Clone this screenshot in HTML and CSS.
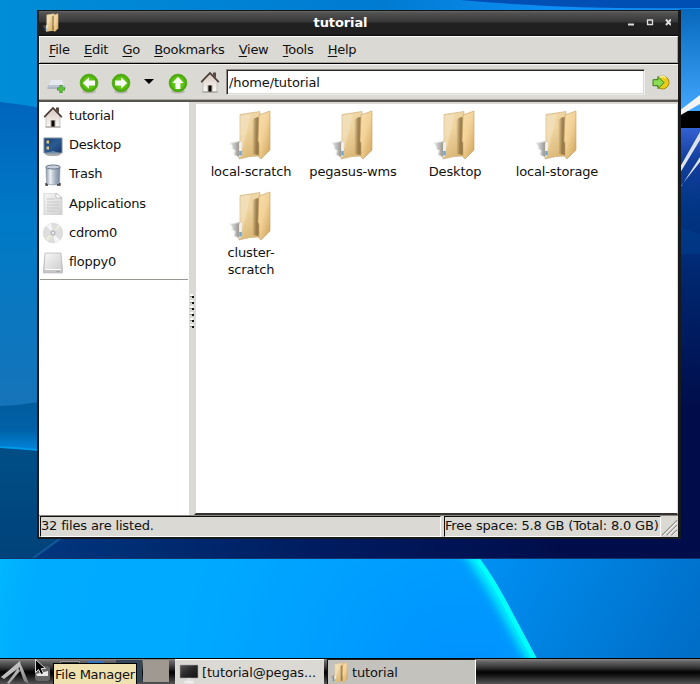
FILE: index.html
```
<!DOCTYPE html>
<html lang="en">
<head>
<meta charset="utf-8">
<title>tutorial</title>
<link rel="stylesheet" href="styles.css">
</head>
<body>
<svg width="0" height="0" class="defs">
  <defs>
    <linearGradient id="fold" x1="0" y1="0" x2=".4" y2="1"><stop offset="0" stop-color="#edd6a8"/><stop offset=".45" stop-color="#efd5a1"/><stop offset="1" stop-color="#dbb878"/></linearGradient>
    <linearGradient id="flap" x1="0" y1="0" x2=".8" y2="1"><stop offset="0" stop-color="#f7dfb0"/><stop offset=".5" stop-color="#f3d297"/><stop offset="1" stop-color="#d3a962"/></linearGradient>
    <linearGradient id="gap" x1="0" x2="1"><stop offset="0" stop-color="#8b6c39" stop-opacity="0"/><stop offset=".6" stop-color="#7b6033" stop-opacity=".7"/><stop offset="1" stop-color="#69502a" stop-opacity=".6"/></linearGradient>
    <linearGradient id="shade" x1="0" x2="1"><stop offset="0" stop-color="#aaa" stop-opacity=".4"/><stop offset="1" stop-color="#555" stop-opacity=".9"/></linearGradient>
    <radialGradient id="green" cx=".5" cy=".5" r=".5"><stop offset="0" stop-color="#83dc2e"/><stop offset=".7" stop-color="#58bd10"/><stop offset="1" stop-color="#429c08"/></radialGradient>
    <linearGradient id="wall" x1="0" y1="0" x2="0" y2="1"><stop offset="0" stop-color="#d8c9bf"/><stop offset="1" stop-color="#fbfaf8"/></linearGradient>
    <linearGradient id="metal" x1="0" x2="1"><stop offset="0" stop-color="#8795a8"/><stop offset=".3" stop-color="#eef2f7"/><stop offset=".6" stop-color="#aebaca"/><stop offset="1" stop-color="#77869a"/></linearGradient>
    <linearGradient id="paper" x1="0" y1="0" x2="1" y2="1"><stop offset="0" stop-color="#f7f7f7"/><stop offset="1" stop-color="#cfcfcf"/></linearGradient>
    <linearGradient id="screen" x1="0" y1="0" x2="1" y2="1"><stop offset="0" stop-color="#1b3f72"/><stop offset=".5" stop-color="#2b5b93"/><stop offset="1" stop-color="#153a6b"/></linearGradient>
    <linearGradient id="dark" x1="0" y1="0" x2="1" y2="1"><stop offset="0" stop-color="#555"/><stop offset=".5" stop-color="#292929"/><stop offset="1" stop-color="#111"/></linearGradient>
    <linearGradient id="swallow" x1="0" y1="0" x2="1" y2="1"><stop offset="0" stop-color="#eee"/><stop offset="1" stop-color="#777"/></linearGradient>
    <symbol id="folder" viewBox="0 0 44 52">
      <path d="M12 31L1 32.500l3 3-.5 3 3 2-1 4.500 6.500 3z" fill="url(#shade)" opacity=".35"/>
      <path d="M12 32L2.500 33.500l2.500 3 0 2 3 2-1 4 5 3z" fill="url(#shade)" opacity=".6"/>
      <path d="M12 4.500L32 1.500V46L22 46.500 11 49V33l1-2z" fill="url(#fold)" stroke="#c7ab76" stroke-width=".6"/>
      <path d="M15 5l8-1-8 34-3 2V6z" fill="#fff" opacity=".22"/>
      <path d="M24 11q2-4 7-4v38l-6-1z" fill="url(#gap)"/>
      <path d="M31 5l11-4v39l-9 9-2-2V33l-1-2z" fill="url(#flap)" stroke="#c69e5e" stroke-width=".6"/>
      <path d="M11.200 32.500q2-1.500 2.600 0v13l-2.600 2z" fill="#eef2f5"/><path d="M11.200 41h2.600v4.500h-2.600z" fill="#6da7d8"/>
    </symbol>
    <symbol id="home" viewBox="0 0 20 22">
      <path d="M3 10L10 3l7 7v11H3z" fill="url(#wall)" stroke="#aaa" stroke-width=".6"/>
      <path d="M13 1.500h3V7l-3-3z" fill="#5c4942"/>
      <path d="M1.200 11.200L10 2l8.800 9.200" fill="none" stroke="#493b35" stroke-width="1.700"/>
      <path d="M7.500 14h5v7h-5z" fill="#b2a69b"/><path d="M8.500 14.600h3V21h-3z" fill="#090909"/><path d="M2.500 21h15" stroke="#9b958e"/>
    </symbol>
    <symbol id="disc" viewBox="0 0 20 22">
      <ellipse cx="10" cy="19.500" rx="7" ry="2" fill="#777" opacity=".35"/>
      <circle cx="10" cy="11" r="8.900" fill="url(#green)" stroke="#57aa20" stroke-width=".8"/>
    </symbol>
    <path id="pointer" d="M3.800 11l6.100-5.700v3.300H16v4.900H9.900v3.300z" fill="#f8fbf5"/>
    <symbol id="arrow-go" viewBox="0 0 18 16">
      <circle cx="10.500" cy="7.500" r="6.500" fill="#e9cb1a" stroke="#a98a08"/><path d="M6 4a5 5 0 0 1 8-1" fill="none" stroke="#fff6a0" stroke-width="1.500"/>
      <path d="M1 4.700h5V1.600l6 6.100-6 6v-3H1z" fill="#8ddc55" stroke="#397e17"/>
    </symbol>
  </defs>
</svg>
<main class="desktop">
  <svg class="wallpaper" viewBox="0 0 700 684" preserveAspectRatio="none" aria-hidden="true">
    <defs>
      <linearGradient id="w1" x1="0" y1="0" x2="1" y2="0"><stop offset="0" stop-color="#008dd7"/><stop offset=".55" stop-color="#007bd2"/><stop offset=".8" stop-color="#0f8ff5"/><stop offset="1" stop-color="#148df0"/></linearGradient>
      <linearGradient id="w2" x1="0" y1="0" x2="0" y2="1"><stop offset="0" stop-color="#0065bd"/><stop offset=".4" stop-color="#007ac6"/><stop offset="1" stop-color="#1674b9"/></linearGradient>
      <linearGradient id="w3" x1="0" y1="0" x2="0" y2="1"><stop offset="0" stop-color="#005c9c"/><stop offset=".55" stop-color="#0062a9"/><stop offset="1" stop-color="#008be0"/></linearGradient>
      <linearGradient id="w4" x1="0" y1="0" x2="1" y2="0"><stop offset="0" stop-color="#003a82"/><stop offset=".45" stop-color="#001c60"/><stop offset=".8" stop-color="#000d4b"/></linearGradient>
      <linearGradient id="w5" x1="0" y1="0" x2="0" y2="1"><stop offset="0" stop-color="#0867ba"/><stop offset=".25" stop-color="#1579cd"/><stop offset="1" stop-color="#43a8ff"/></linearGradient>
      <linearGradient id="w6" x1="0" y1="0" x2="0" y2="1"><stop offset="0" stop-color="#3562d4"/><stop offset=".12" stop-color="#123e9b"/><stop offset=".3" stop-color="#003584"/><stop offset=".65" stop-color="#002066"/><stop offset="1" stop-color="#000d4b"/></linearGradient>
      <radialGradient id="w7" gradientUnits="userSpaceOnUse" cx="470" cy="690" r="490"><stop offset="0" stop-color="#0090ff"/><stop offset=".35" stop-color="#00a0ff"/><stop offset=".6" stop-color="#00aaff"/><stop offset=".92" stop-color="#00acff"/><stop offset="1" stop-color="#00b8ff"/></radialGradient>
      <linearGradient id="w8" gradientUnits="userSpaceOnUse" x1="480" y1="540" x2="700" y2="660"><stop offset="0" stop-color="#0092f5"/><stop offset="1" stop-color="#006cc5"/></linearGradient>
      <clipPath id="lower"><path d="M0 559h480q12 16 24 38l33 62H0z"/></clipPath>
      <filter id="glow" x="-50%" y="-50%" width="200%" height="200%"><feGaussianBlur stdDeviation="5"/></filter>
      <linearGradient id="w9" x1="0" y1="0" x2="0" y2="1"><stop offset="0" stop-color="#004e86"/><stop offset="1" stop-color="#00427a"/></linearGradient>
    </defs>
    <path d="M0 0h700v559H0z" fill="url(#w4)"/>
    <path d="M0 0h700v130H0z" fill="url(#w1)"/>
    <path d="M460 0h240v8q-130 2-240-8z" fill="#004fb4"/>
    <path d="M0 102q20 2 40 6v300H0z" fill="url(#w2)"/>
    <path d="M0 406q20-1 40-4v51H0z" fill="url(#w3)"/>
    <path d="M0 448l40 3v88h22L33 559H0z" fill="url(#w9)"/>
    <path d="M0 447q20 1 40 3" stroke="#009bea" stroke-width="1.500" fill="none"/>
    <path d="M62 537L32 559" stroke="#12599b" stroke-width="2"/>
    <path d="M679 9h21v105h-21z" fill="url(#w5)"/><path d="M679 127h21v280h-21z" fill="url(#w6)"/>
    <path d="M679 111h21v17h-21z" fill="#000"/>
    <path d="M679 111l21-16v9l-21 12z" fill="#f1f3f5"/>
    <path d="M680 167l20-35v8l-20 33zM680 188l20-31v5l-20 25z" fill="#dce3ec"/>
    <path d="M679 227l21 7v20h-21z" fill="#004394" opacity=".4"/>
    <path d="M0 558.500h700" stroke="#17336b"/>
    <path d="M0 559h700v100H0z" fill="url(#w8)"/><path d="M0 559h700v100H0z" fill="url(#w7)" clip-path="url(#lower)"/>
    <g clip-path="url(#lower)"><path d="M470 548q18 26 32 50l38 70" fill="none" stroke="#00f6ff" stroke-width="16" filter="url(#glow)"/><path d="M480 559q12 16 24 38l33 62" fill="none" stroke="#00ffff" stroke-width="9"/></g>
  </svg>

  <section class="window">
    <header class="titlebar"><svg class="title-icon"><use href="#folder"/></svg><h1>tutorial</h1>
      <svg class="controls" viewBox="0 0 44 10"><path d="M1 6.500h6" stroke="#ddd" stroke-width="2"/><path d="M20.500 2h5v4.500h-5zM20 2h6" fill="none" stroke="#ddd" stroke-width="1.300"/><path d="M39 1.500l5 5.500m0-5.500l-5 5.500" stroke="#ddd" stroke-width="2"/></svg>
    </header>
    <nav class="menu"><span><u>F</u>ile</span><span><u>E</u>dit</span><span><u>G</u>o</span><span><u>B</u>ookmarks</span><span><u>V</u>iew</span><span><u>T</u>ools</span><span><u>H</u>elp</span></nav>
    <div class="toolbar">
      <svg class="newtab" viewBox="0 0 20 16"><path d="M4 2h11l2 6H2z" fill="#e6eaf0"/><path d="M1 7h17v4H1z" fill="#bbc5d4"/><path d="M0 10h19" stroke="#a2a8b0"/><path d="M14 7v8m-4-4h8" stroke="#45a02a" stroke-width="3.200"/><path d="M14 8v6m-3-3h6" stroke="#67c53c" stroke-width="1.500"/></svg>
      <svg class="round" viewBox="0 0 20 22"><use href="#disc"/><use href="#pointer"/></svg>
      <svg class="round" viewBox="0 0 20 22"><use href="#disc"/><use href="#pointer" transform="rotate(180 10 11)"/></svg>
      <i class="drop"></i>
      <svg class="round" viewBox="0 0 20 22"><use href="#disc"/><use href="#pointer" transform="rotate(90 10 11)"/></svg>
      <svg class="home"><use href="#home"/></svg>
      <div class="address">/home/tutorial</div><svg class="go"><use href="#arrow-go"/></svg>
    </div>
    <div class="content">
      <aside class="places">
        <div><svg viewBox="0 0 20 22"><use href="#home"/></svg>tutorial</div>
        <div><svg viewBox="0 0 20 22"><ellipse cx="10" cy="19" rx="8" ry="2" fill="#aaa"/><path d="M1 3h18v15H1z" fill="url(#screen)" stroke="#7c8999"/><path d="M3.500 5.500h2.500v3H3.500zM3.500 11.500h2.500v3H3.500z" fill="#e5c983"/><path d="M3 18l7-2 7 2z" fill="#6a8fae"/></svg>Desktop</div>
        <div><svg viewBox="0 0 20 22"><path d="M3 3h14l-.5 17q-6.500 2-13 0z" fill="url(#metal)" stroke="#8490a0" stroke-width=".6"/><ellipse cx="10" cy="3" rx="7.200" ry="2" fill="#c5ced9" stroke="#69788b"/><path d="M3 19v2h2m9 0h3v-2" stroke="#333" fill="none" stroke-width="1.300"/></svg>Trash</div>
        <div><svg viewBox="0 0 20 22" preserveAspectRatio="none"><path d="M1 0h12l6 5v17H1z" fill="url(#paper)" stroke="#ccc" stroke-width=".8"/><path d="M4 6h8M4 9h12M4 12h12M4 15h12M4 18h8" stroke="#c8c8c8"/><path d="M13 0v5h6z" fill="#fff" stroke="#aaa" stroke-width=".6"/></svg>Applications</div>
        <div><svg viewBox="0 0 20 22"><circle cx="10" cy="11" r="9.800" fill="#dedede" stroke="#ccc" stroke-width=".5"/><path d="M10 11L3 4a10 10 0 0 1 5-2.500zM10 11l7 7a10 10 0 0 1-5 2.500z" fill="#f5f5f5"/><path d="M10 11l5-8 2 1.500zM10 11l-7 5 2 3z" fill="#efefd8"/><circle cx="10" cy="11" r="3" fill="#ccc"/><circle cx="10" cy="11" r="1.500" fill="#fff" stroke="#999" stroke-width=".6"/></svg>cdrom0</div>
        <div><svg viewBox="0 0 20 22"><path d="M2 1h16l1.500 16v4H.5v-4z" fill="#c6c6c6" stroke="#b7b7b7" stroke-width=".7"/><path d="M2.500 1.500h15L18.500 17h-17z" fill="url(#paper)"/><path d="M2 17.500h16" stroke="#fff"/><path d="M13 19.500h4" stroke="#aaa"/></svg>floppy0</div>
      </aside>
      <div class="splitter"><i></i></div>
      <div class="files">
        <figure><svg><use href="#folder"/></svg><figcaption>local-scratch</figcaption></figure>
        <figure><svg><use href="#folder"/></svg><figcaption>pegasus-wms</figcaption></figure>
        <figure><svg><use href="#folder"/></svg><figcaption>Desktop</figcaption></figure>
        <figure><svg><use href="#folder"/></svg><figcaption>local-storage</figcaption></figure>
        <figure><svg><use href="#folder"/></svg><figcaption>cluster-<br>scratch</figcaption></figure>
      </div>
    </div>
    <footer class="status"><span class="count">32 files are listed.</span><span class="space">Free space: 5.8 GB (Total: 8.0 GB)</span><svg viewBox="0 0 18 21"><path d="M1 20L17 4M6 20L17 9M11 20l6-6" stroke="#8b8882" stroke-width="1.200"/><path d="M2.500 20L17 5.500M7.500 20L17 10.500M12.500 20l4.500-4.500" stroke="#fff"/></svg></footer>
  </section>

  <footer class="taskbar">
    <svg class="launch" viewBox="0 0 175 26"><path d="M1 18L20 2l1 5-5 4-12 9zM7 24l11-15 2 3L9 25zM19 2l4 8 6 15-5-3-4-11z" fill="url(#swallow)"/><rect x="35" y="7" width="15" height="15" rx="3" fill="#666"/><path d="M36 15l12-3v5H37z" fill="#e9e9e9"/><path d="M60.500 2.500h19v10h-19z" fill="#303030" stroke="#999"/><path d="M88 2h15v6H88z" fill="#3872c3"/><path d="M116 1h26v22h-26z" fill="#334758"/><path d="M143 1h26v22h-26z" fill="#9f9992"/></svg>
    <div class="task active"><svg viewBox="0 0 20 22"><path d="M1 3h18v13H1z" fill="url(#dark)" stroke="#aaa" stroke-width=".6"/><path d="M8 16h4v3h3v2H5v-2h3z" fill="#dfdfdf"/><ellipse cx="10" cy="20" rx="5" ry="1.500" fill="#eee"/></svg><span>[tutorial@pegas...</span></div>
    <div class="task current"><svg><use href="#folder"/></svg><span>tutorial</span></div>
  </footer>
  <div class="tooltip">File Manager</div>
  <svg class="cursor" viewBox="0 0 12 18"><path d="M.5.500v13l3-3 2.500 5 2.500-1-2.300-5h4.300z" fill="#000" stroke="#fff" stroke-width=".8"/></svg>
</main>
</body>
</html>
```
FILE: styles.css
```
* { box-sizing: border-box; }
body { margin: 0; font: 13px/17px "DejaVu Sans", sans-serif; letter-spacing: -.15px; color: #111; }
svg { display: block; flex: none; }
.defs { position: absolute; }
.desktop { position: relative; width: 700px; height: 684px; overflow: hidden; display: flex; flex-direction: column; justify-content: flex-end; }
.wallpaper { position: absolute; inset: 0; width: 700px; height: 684px; }
.window { position: absolute; left: 37px; top: 10px; width: 644px; height: 529px; border: 2px solid #17191b; border-top: 0; border-right-width: 3px; display: flex; flex-direction: column; background: #dad9d4; }
.titlebar { height: 26px; flex: none; display: flex; align-items: center; padding: 0 6px 0 3px; border-top: 1px solid #171717; background: linear-gradient(#666 0, #515151 2px, #373737 11px, #202020 12px, #202020 23px, #080808); box-shadow: -1px 0 #222; }
.titlebar h1 { flex: 1; margin: 0; padding-right: 6px; text-align: center; color: #fff; font-size: 13px; letter-spacing: -.1px; line-height: 19px; height: 22px; }
.title-icon { width: 17px; height: 20px; margin-top: -2px; }
.controls { width: 44px; height: 10px; margin: -2px 1px 0 -1px; }
.menu { height: 28px; flex: none; display: flex; gap: 14.300px; padding: 4px 10px 5px; border-top: 1px solid #fff; border-bottom: 1px solid #000; box-shadow: inset 1px 0 #f2f1ec, inset -1px -1px #a6a39e; letter-spacing: -.27px; }
.menu u { text-underline-offset: 2px; text-decoration-thickness: 1px; }
.toolbar { height: 38px; flex: none; display: flex; align-items: center; padding: 0 8px 2px 7px; border-top: 1px solid #f4f3f0; border-bottom: 2px solid #57544f; box-shadow: inset 0 -1px #aaa7a1, inset 1px 0 #f2f1ec; }
.newtab { width: 20px; height: 16px; margin: 8px 12px 0 1px; }
.round { width: 20px; height: 22px; margin: 2px 12px 0 0; }
.drop { border: 5px solid transparent; border-top-color: #000; border-bottom: 0; margin: 0 14px 0 1px; width: 10px; }
.home { width: 20px; height: 22px; margin-top: 1px; margin-right: 6px; }
.address { flex: 1; height: 26px; background: #fff; border: 1px solid #8e8a84; border-right: 1px solid #eee; border-bottom: 1px solid #eee; box-shadow: inset 1px 1px #2d2525, inset -1px -1px #dad9d4; padding: 4px 2px; letter-spacing: -.12px; }
.go { width: 18px; height: 16px; margin-left: 7px; margin-top: 2px; }
.content { height: 413px; flex: none; display: flex; background: #fff; }
.places { width: 150px; margin-top: -1px; }
.places div { display: flex; align-items: center; gap: 6px; height: 29.200px; padding-left: 4px; letter-spacing: -.22px; }
.places svg { width: 20px; height: 22px; margin-top: 2px; }
.places::after { content: ""; display: block; height: 1px; margin: 3px 1px 0 1px; background: #99968f; }
.splitter { width: 5px; background: #dad9d4; display: flex; align-items: center; }
.splitter i { position: relative; flex: none; width: 4px; height: 34px; margin: 4px 0 0 1px; background: repeating-linear-gradient(#111 0 2px, transparent 2px 6px) 2px 2px / 2px 34px no-repeat, repeating-linear-gradient(#fff 0 2px, #8c8984 2px 3px, transparent 3px 6px) 0 0 / 3px 34px no-repeat; }
.files { flex: 1; display: flex; flex-wrap: wrap; align-content: flex-start; border: solid #dad9d4; border-width: 2px 1px 2px 2px; border-bottom-color: #35322f; padding: 6px 0 0 4px; }
.files figure { margin: 0; width: 102px; height: 80.500px; display: flex; flex-direction: column; align-items: center; }
.files svg { width: 44px; height: 52px; margin: 0 0 1px -3px; }
.files figcaption { text-align: center; line-height: 17.500px; white-space: nowrap; }
.status { height: 22px; flex: none; display: flex; padding-left: 1px; border-top: 1px solid #888480; line-height: 18px; }
.status span { border: 1px solid #111; border-right-color: #fff; border-bottom-color: #fff; height: 21px; white-space: nowrap; letter-spacing: -.16px; }
.count { width: 401px; margin-right: 3px; }
.space { width: 217px; }
.status svg { width: 17px; height: 21px; }
.taskbar { position: relative; height: 26px; display: flex; border-top: 1px solid #000; background: linear-gradient(#8a8a8a 0, #6a6a6a 2px, #303030 9px, #030303 13px, #111 16px, #5d5d5d 26px); }
.launch { width: 175px; height: 26px; }
.task { display: flex; align-items: center; width: 149px; height: 26px; padding-left: 4px; border-top: 1px solid #fff; background: #dad9d4; }
.task svg { width: 20px; height: 22px; }
.task span { padding-left: 3px; margin-top: -1px; white-space: nowrap; }
.current { margin-left: 3px; background: #c4c2bd; border-top-color: #222; border-left: 1px solid #111; border-right: 1px solid #fff; padding-left: 1px; }
.tooltip { position: absolute; left: 53px; top: 663px; width: 84px; height: 24px; border: 1px solid #000; background: #f0e1b0; line-height: 21px; padding-left: 1px; white-space: nowrap; letter-spacing: -.25px; }
.cursor { position: absolute; left: 35px; top: 659px; width: 12px; height: 18px; }
```
